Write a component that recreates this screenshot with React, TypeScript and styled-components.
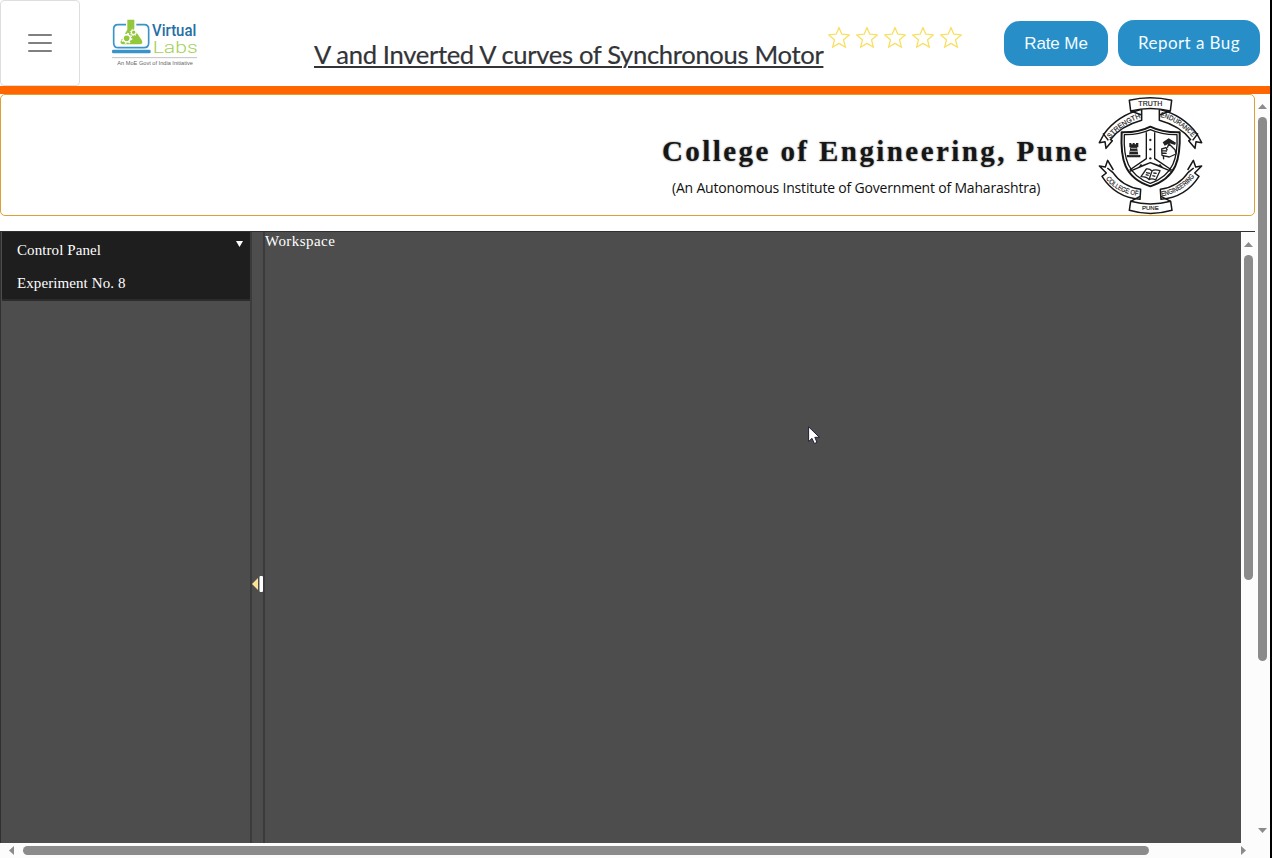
import React from 'react';
import styled, { createGlobalStyle } from 'styled-components';

const GlobalStyle = createGlobalStyle`
  *, *::before, *::after { box-sizing: border-box; }
  html, body { margin: 0; padding: 0; background: #fff; }
  body { overflow: hidden; }
`;

const Page = styled.div`
  width: 1272px;
  height: 858px;
  border-right: 2px solid #000;
  background: #fff;
  display: flex;
  flex-direction: column;
  overflow: hidden;
`;

const Header = styled.header`
  height: 94px;
  flex: none;
  border-bottom: 8px solid #ff6600;
  display: flex;
  align-items: flex-start;
`;

const MenuButton = styled.button`
  width: 80px;
  height: 86px;
  padding: 0;
  background: #fff;
  border: 1px solid #dedede;
  border-radius: 4px;
  display: flex;
  flex-direction: column;
  align-items: center;
  justify-content: center;
  gap: 6px;
`;

const MenuBar = styled.span`
  width: 24px;
  height: 2px;
  border-radius: 1px;
  background: #808080;
`;

const Logo = styled.svg`
  width: 90px;
  height: 50px;
  margin: 17px 0 0 30px;
  flex: none;
`;

const Title = styled.h1`
  width: 512px;
  margin: 37px 0 0 114px;
  font: 400 25.6px/34px Lato, sans-serif;
  letter-spacing: -0.33px;
  color: #323438;
  -webkit-text-stroke: 0.2px #323438;
  white-space: nowrap;
  text-decoration: underline;
  text-decoration-thickness: 2px;
  text-underline-offset: 2px;
`;

const Stars = styled.div`
  display: flex;
  gap: 4px;
  margin: 25px 0 0 0.5px;
`;

const Star = styled.svg`
  width: 24px;
  height: 24px;
  fill: none;
  stroke: #f9df63;
  stroke-width: 1.3;
  stroke-linejoin: round;
`;

const Actions = styled.div`
  display: flex;
  align-items: flex-end;
  gap: 10px;
  margin: 20px 10px 0 auto;
`;

const ActionButton = styled.button<{ $w: number; $h: number; $font: string; $spacing?: string; $lift?: number }>`
  width: ${(p) => p.$w}px;
  height: ${(p) => p.$h}px;
  padding: 0 0 ${(p) => p.$lift ?? 0}px;
  border: 0;
  border-radius: 16px;
  background: #288ec8;
  color: #f1fbff;
  font: ${(p) => p.$font};
  letter-spacing: ${(p) => p.$spacing ?? '0'};
  white-space: nowrap;
`;

const Body = styled.div`
  flex: 1;
  min-height: 0;
  display: flex;
`;

const Content = styled.div`
  width: 1255px;
  display: flex;
  flex-direction: column;
`;

const Banner = styled.section`
  height: 122px;
  flex: none;
  border: 1px solid #dda035;
  border-radius: 5px;
  display: flex;
  justify-content: flex-end;
  padding: 1px 50px 0 0;
`;

const College = styled.div`
  width: 438px;
  display: flex;
  flex-direction: column;
`;

const CollegeName = styled.div`
  margin: 36px 0 0 2px;
  height: 39px;
  font: 700 29px/38px 'Liberation Serif', serif;
  letter-spacing: 2.42px;
  color: #161616;
  text-shadow: 0 0 2px #777;
  white-space: nowrap;
`;

const CollegeNote = styled.div`
  margin: 7px 0 0 12px;
  font: 400 14px/20px 'Open Sans', sans-serif;
  letter-spacing: -0.19px;
  color: #111;
  white-space: nowrap;
`;

const Crest = styled.svg`
  width: 106px;
  height: 120px;
  flex: none;
`;

const Lab = styled.section`
  margin-top: 15px;
  height: 612px;
  flex: none;
  border-top: 1px solid #303030;
  display: flex;
  background: #4d4d4d;
  color: #fff;
  font: 15px/18px 'Liberation Serif', serif;
`;

const Sidebar = styled.aside`
  width: 252px;
  flex: none;
  border-left: 1px solid #303030;
  border-right: 2px solid #3b3b3b;
`;

const PanelBox = styled.div`
  height: 69px;
  padding: 9px 7px 0 15px;
  margin-left: 1px;
  background: #1e1e1e;
  border-bottom: 2px solid #2c2c2c;
  display: flex;
  justify-content: space-between;
`;

const PanelLabels = styled.div`
  display: flex;
  flex-direction: column;
  gap: 15px;
  letter-spacing: 0.09px;
`;

const Caret = styled.svg`
  width: 7px;
  height: 6px;
  fill: #fff;
`;

const Splitter = styled.div`
  width: 13px;
  flex: none;
  border-right: 2px solid #3b3b3b;
  padding-top: 343px;
`;

const SplitHandle = styled.svg`
  display: block;
  width: 11px;
  height: 18px;
`;

const Workspace = styled.main`
  position: relative;
  width: 976px;
  flex: none;
  letter-spacing: 0.45px;
`;

const Cursor = styled.svg`
  position: absolute;
  left: 543px;
  top: 194px;
  width: 12px;
  height: 19px;
`;

const VerticalTrack = styled.div<{ $endSpace?: number }>`
  width: 15px;
  flex: none;
  background: #fcfcfc;
  display: flex;
  flex-direction: column;
  align-items: center;
  padding: 10px 0 ${(p) => p.$endSpace ?? 0}px;
`;

const HorizontalTrack = styled.div`
  height: 15px;
  flex: none;
  background: #fcfcfc;
  display: flex;
  align-items: center;
  padding: 0 7px;
`;

const VerticalThumb = styled.div<{ $length: number }>`
  width: 9px;
  height: ${(p) => p.$length}px;
  margin: 8px 0 auto;
  flex: none;
  border-radius: 5px;
  background: #8b8b8b;
`;

const HorizontalThumb = styled.div`
  width: 1126px;
  height: 9px;
  margin: 0 auto 0 7px;
  border-radius: 5px;
  background: #8b8b8b;
`;

const Arrow = styled.svg<{ $turn: number }>`
  width: 9px;
  height: 5px;
  flex: none;
  fill: #8b8b8b;
  transform: rotate(${(p) => p.$turn}deg);
`;

function ScrollArrow({ turn }: { turn: number }) {
  return (
    <Arrow $turn={turn} viewBox="0 0 9 5">
      <path d="M4.5 0 9 5H0z" />
    </Arrow>
  );
}

function VirtualLabsLogo() {
  return (
    <Logo viewBox="330 50 270 150">
      <path d="M378 73H354Q341 73 341 86V127Q341 142 355 142H432Q446 142 446 128V87Q446 73 433 73H409" fill="none" stroke="#3b94c9" strokeWidth="5" />
      <rect x="336" y="148" width="116" height="11" rx="4" fill="#3b94c9" />
      <path d="M382 58H403V87L425 119Q431 132 419 132H370Q357 131 364 118L382 88Z" fill="#93c83d" />
      <circle cx="380" cy="114" r="11" fill="none" stroke="#fff" strokeWidth="5" />
      <circle cx="380" cy="114" r="15" fill="none" stroke="#fff" strokeWidth="4" strokeDasharray="5 6.8" />
      <circle cx="401" cy="96" r="7" fill="none" stroke="#fff" strokeWidth="3.5" />
      <circle cx="401" cy="96" r="10" fill="none" stroke="#fff" strokeWidth="3" strokeDasharray="3.6 4.25" />
      <text x="456" y="108" textLength="133" lengthAdjust="spacingAndGlyphs" fontFamily="Roboto, sans-serif" fontWeight="500" fontSize="47" fill="#256fa5">Virtual</text>
      <text x="458" y="159" textLength="135" lengthAdjust="spacingAndGlyphs" fontFamily="Roboto, sans-serif" fontWeight="300" fontSize="50" fill="#a5cf58">Labs</text>
      <path d="M336 172H591" stroke="#b5b5b5" strokeWidth="2.5" />
      <text x="352" y="193" textLength="227" lengthAdjust="spacingAndGlyphs" fontFamily="Liberation Sans, sans-serif" fontSize="17" fill="#666">An MoE Govt of India Initiative</text>
    </Logo>
  );
}

function CollegeCrest() {
  const upper = 'M57 132Q98 76 170 58V91Q108 108 76 149L82 152 63 175 60 155 43 158Z';
  const lower = 'M67 234 84 248Q112 290 167 298L165 328Q91 322 51 259L64 249 43 228 61 231 68 211 85 240';
  return (
    <Crest viewBox="39 18 318 360">
      <defs>
        <path id="arc-strength" d="M75 146Q112 102 169 83" />
        <path id="arc-endurance" d="M225 80Q283 95 324 144" />
        <path id="arc-college" d="M62 267Q99 311 163 318" />
        <path id="arc-engineering" d="M230 319Q292 309 331 256" />
      </defs>
      <g fill="#fff" stroke="#171717" strokeWidth="4.5" strokeLinejoin="round">
        <path d={upper} />
        <path d={upper} transform="translate(393 0) scale(-1 1)" />
        <path d="M54 130 70 151M339 130 323 151" />
        <path d={lower} />
        <path d={lower} transform="translate(393 0) scale(-1 1)" />
        <path d="M133 31Q196 16 260 31L256 63Q196 48 137 63Z" />
        <path d="M137 334Q196 350 257 334L261 361Q196 380 133 361Z" />
        <path d="M137 63 170 75M256 63 223 75M137 334 165 319M257 334 228 319" />
        <path d="M110 127Q162 128 196 110Q232 128 284 127C287 207 275 263 196 289C117 263 106 207 110 127Z" strokeWidth="6" />
        <path d="M118 134Q162 135 196 119Q232 135 276 134C279 202 266 256 196 280C127 256 115 202 118 134Z" strokeWidth="4" />
        <path d="M184 127V206L134 240M209 127V206L260 240M134 244 196 218 259 244M161 231 196 218 232 231" strokeWidth="4" fill="none" />
      </g>
      <g fill="#222">
        <circle cx="196" cy="150" r="3.5" />
        <circle cx="196" cy="178" r="3.5" />
        <circle cx="196" cy="205" r="3.5" />
        <circle cx="168" cy="226" r="3.5" />
        <circle cx="225" cy="226" r="3.5" />
        <path d="M133 159H139V163H143V159H149V163H153V159H160V172H156L160 195H166V202H126V195H132L136 172H133Z" />
        <path d="M138 175H155M135 184H158M132 194H162" stroke="#fff" strokeWidth="2" />
        <path d="M233 157 251 145 273 158 270 165 254 160 239 167Z" />
      </g>
      <g fill="#fff" stroke="#222" strokeWidth="4" strokeLinejoin="round">
        <path d="M253 163 270 179 273 192 253 201 231 196 230 177 243 173 247 181M231 182 246 183M230 189 245 190M235 197 236 208M253 158 247 173" />
        <path d="M168 260 184 237Q193 235 201 243Q208 237 225 242L212 270Q201 264 192 269Q184 259 168 260ZM201 243 192 269M183 248 195 250M182 254 191 256M205 249 215 250M202 257 211 259" />
      </g>
      <g fill="#222" stroke="#222" strokeWidth="0.5" fontFamily="Liberation Sans, sans-serif" fontSize="21">
        <text x="160" y="49" textLength="72">TRUTH</text>
        <text x="171" y="361" textLength="50" fontSize="18">PUNE</text>
        <text><textPath href="#arc-strength" textLength="113" lengthAdjust="spacingAndGlyphs">STRENGTH</textPath></text>
        <text><textPath href="#arc-endurance" textLength="117" lengthAdjust="spacingAndGlyphs">ENDURANCE</textPath></text>
        <text><textPath href="#arc-college" textLength="112" lengthAdjust="spacingAndGlyphs">COLLEGE OF</textPath></text>
        <text><textPath href="#arc-engineering" textLength="118" lengthAdjust="spacingAndGlyphs">ENGINEERING</textPath></text>
      </g>
    </Crest>
  );
}

export default function App() {
  return (
    <>
      <GlobalStyle />
      <Page>
        <Header>
          <MenuButton aria-label="Menu"><MenuBar /><MenuBar /><MenuBar /></MenuButton>
          <VirtualLabsLogo />
          <Title>V and Inverted V curves of Synchronous Motor</Title>
          <Stars>
            {[1, 2, 3, 4, 5].map((n) => (
              <Star key={n} viewBox="0 0 24 24">
                <path d="M12 2.5 14.8 9.2 22.3 9.9 16.6 14.8 18.4 22.3 12 18.4 5.6 22.3 7.4 14.8 1.7 9.9 9.2 9.2Z" />
              </Star>
            ))}
          </Stars>
          <Actions>
            <ActionButton $w={104} $h={45} $font="400 17px 'Liberation Sans', sans-serif" $spacing="-0.1px">Rate Me</ActionButton>
            <ActionButton $w={142} $h={46} $font="400 17px Lato, sans-serif" $spacing="0.42px" $lift={2}>Report a Bug</ActionButton>
          </Actions>
        </Header>
        <Body>
          <Content>
            <Banner>
              <College>
                <CollegeName>College of Engineering, Pune</CollegeName>
                <CollegeNote>(An Autonomous Institute of Government of Maharashtra)</CollegeNote>
              </College>
              <CollegeCrest />
            </Banner>
            <Lab>
              <Sidebar>
                <PanelBox>
                  <PanelLabels><span>Control Panel</span><span>Experiment No. 8</span></PanelLabels>
                  <Caret viewBox="0 0 7 6"><path d="M0 0H7L3.5 6Z" /></Caret>
                </PanelBox>
              </Sidebar>
              <Splitter>
                <SplitHandle viewBox="0 0 11 18">
                  <path d="M0 9 6 3V15Z" fill="#fbe09a" />
                  <rect x="7.5" y="1" width="3.5" height="16" rx="1" fill="#fff" />
                </SplitHandle>
              </Splitter>
              <Workspace>
                Workspace
                <Cursor viewBox="0 0 12 19">
                  <path d="M.6.8V15.5L4 12.3 6.3 17.5 9 16.4 6.8 11.3H11.4Z" fill="#fff" stroke="#20203a" strokeWidth="1" />
                </Cursor>
              </Workspace>
              <VerticalTrack>
                <ScrollArrow turn={0} />
                <VerticalThumb $length={325} />
              </VerticalTrack>
            </Lab>
            <HorizontalTrack>
              <ScrollArrow turn={-90} />
              <HorizontalThumb />
              <ScrollArrow turn={90} />
            </HorizontalTrack>
          </Content>
          <VerticalTrack $endSpace={25}>
            <ScrollArrow turn={0} />
            <VerticalThumb $length={544} />
            <ScrollArrow turn={180} />
          </VerticalTrack>
        </Body>
      </Page>
    </>
  );
}
